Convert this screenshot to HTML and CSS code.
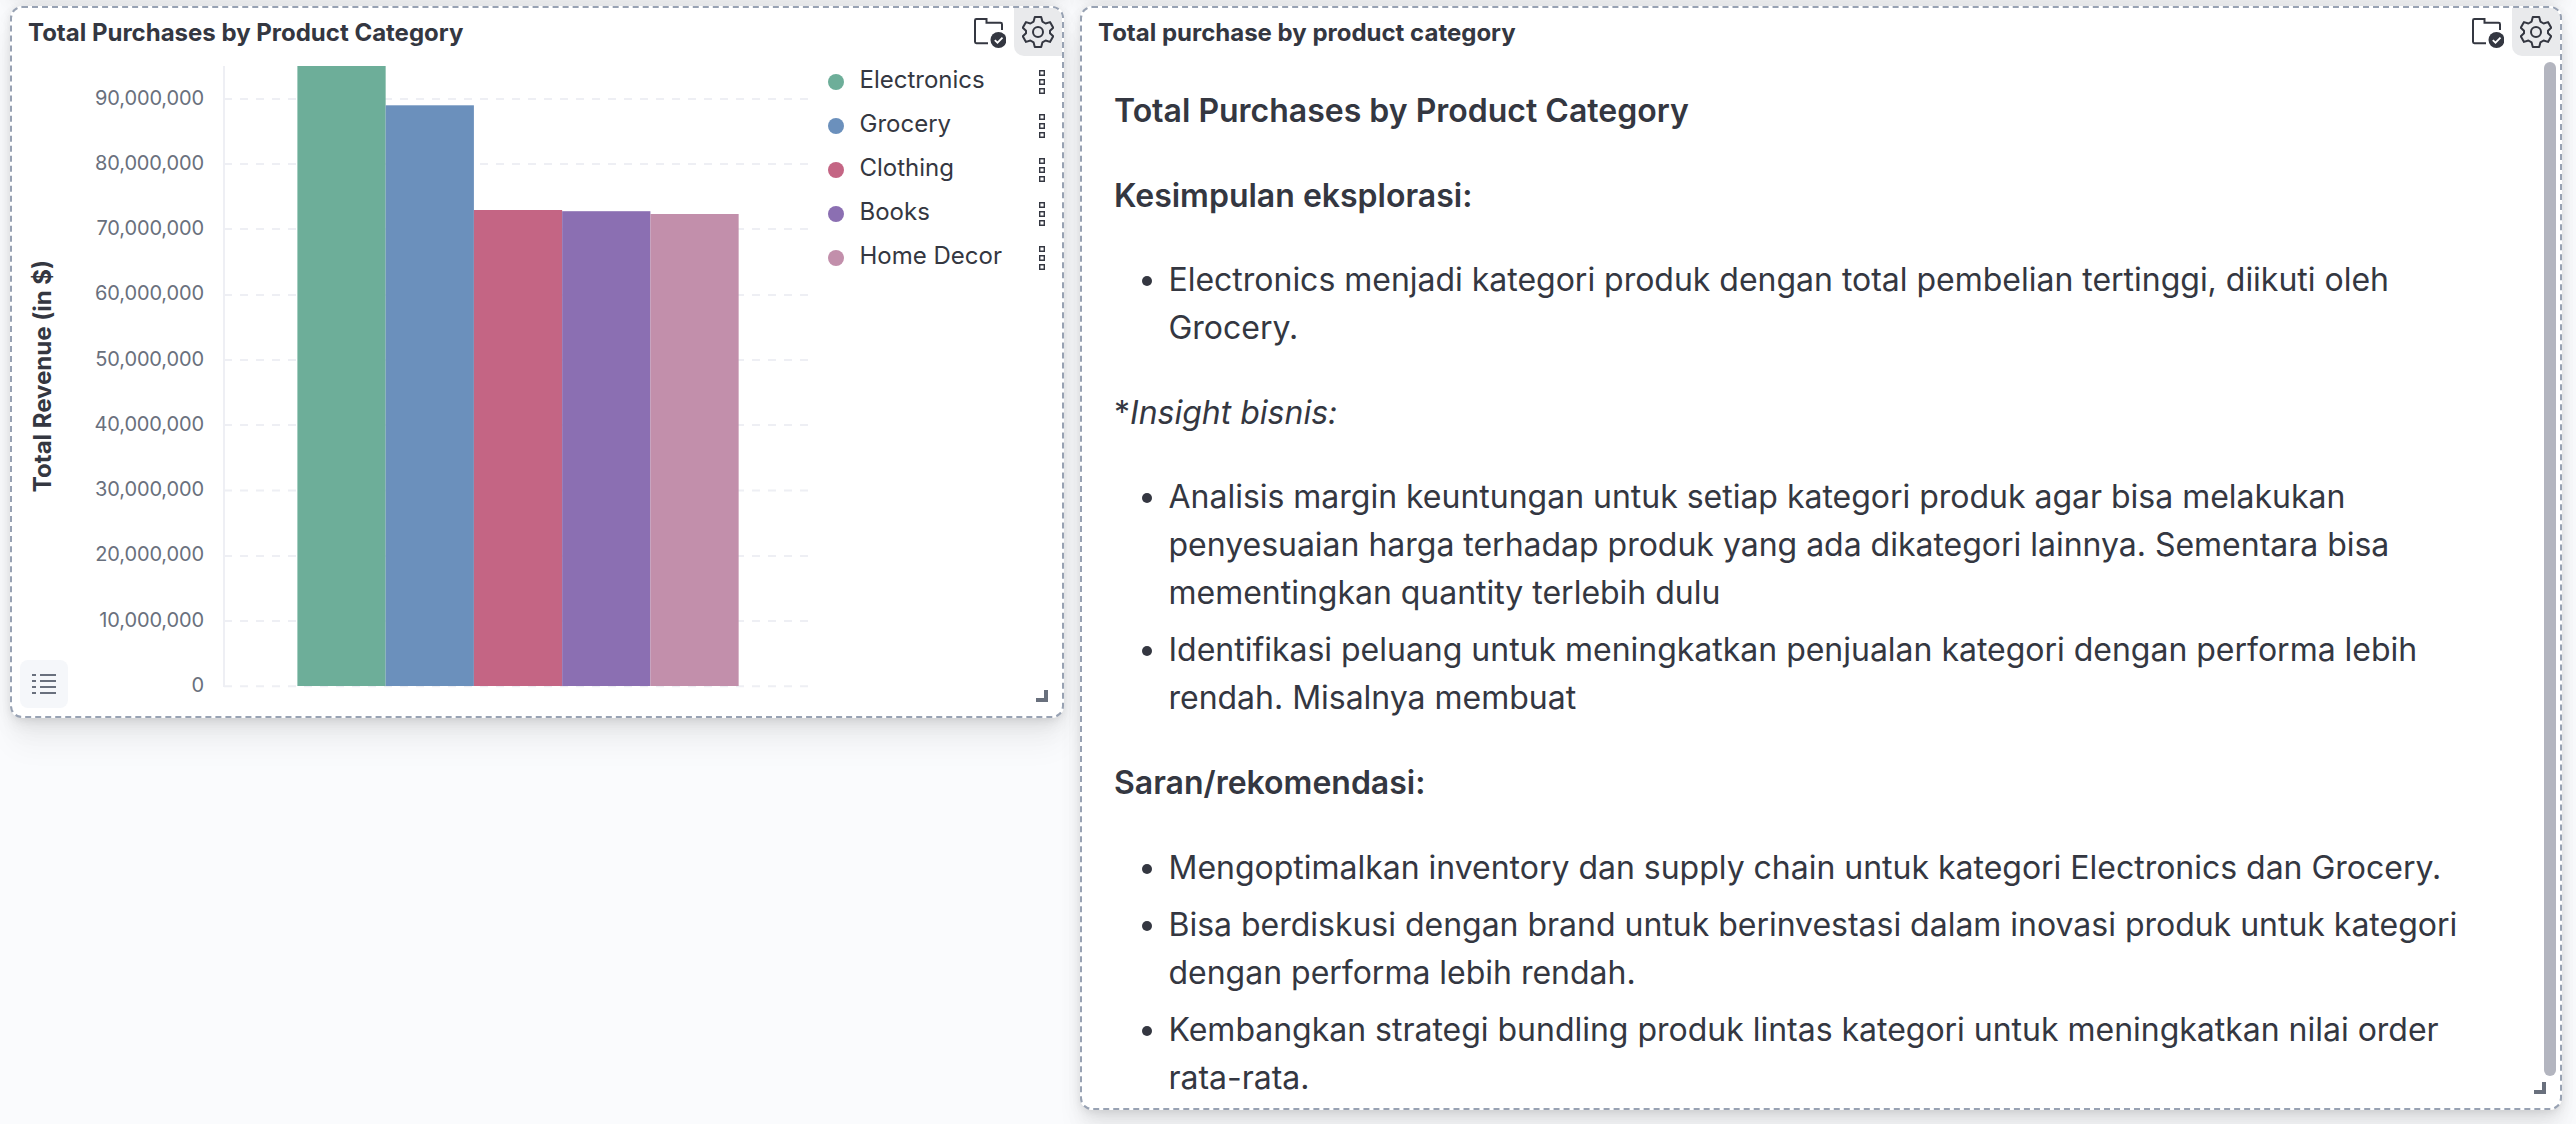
FILE: index.html
```
<!DOCTYPE html>
<html lang="id">
<head>
<meta charset="utf-8">
<title>Dashboard</title>
<link rel="stylesheet" href="styles.css">
</head>
<body>
<svg class="defs" aria-hidden="true">
  <symbol id="folder-check" viewBox="0 0 32 32">
    <path d="M14 25.200H2.400A1.400 1.400 0 0 1 1 23.800V2.400A1.400 1.400 0 0 1 2.400 1H12.500V4.800H26.600A1.400 1.400 0 0 1 28 6.200V12" fill="none" stroke="currentColor" stroke-width="2"/>
    <circle cx="24.500" cy="22" r="8" fill="currentColor"/>
    <path d="M20.800 22.200L23.500 24.700L28.500 19.600" fill="none" stroke="#fff" stroke-width="1.800"/>
  </symbol>
  <symbol id="gear" viewBox="0 0 32 32">
    <path d="M12.800 1H19.200L20.400 5.600L23.600 7.500L28 6.100L31.200 11.700L28 14.800V17.200L31.200 20.300L28 25.900L23.600 24.500L20.400 26.400L19.200 31H12.800L11.600 26.400L8.400 24.500L4 25.900L.8 20.300L4 17.200V14.800L.8 11.700L4 6.100L8.400 7.500L11.600 5.600Z" fill="none" stroke="currentColor" stroke-width="2" stroke-linejoin="round"/>
    <circle cx="16" cy="16" r="5" fill="none" stroke="currentColor" stroke-width="2"/>
  </symbol>
  <symbol id="boxes" viewBox="0 0 6 24">
    <path d="M.7.7h4.600v4.600h-4.600zM.7 9.700h4.600v4.600h-4.600zM.7 18.700h4.600v4.600h-4.600z" fill="none" stroke="currentColor" stroke-width="1.400"/>
  </symbol>
</svg>
<main class="grid">
  <div class="panel above"></div>
  <div class="panel above"></div>

  <section class="panel chart-panel">
    <header class="head">
      <h2>Total Purchases by Product Category</h2>
      <svg class="badge-icon"><use href="#folder-check"/></svg>
      <button class="options"><svg><use href="#gear"/></svg></button>
    </header>
    <div class="chart">
      <svg class="plot" viewBox="0 0 796 644">
        <g class="gridlines">
          <path d="M212 33H796M212 98H796M212 163H796M212 229H796M212 294H796M212 359H796M212 424.500H796M212 490H796M212 555H796M212 620.300H796"/>
        </g>
        <path class="axis" d="M212 0V621"/>
        <g class="bars">
          <rect x="285.400" y="0" width="88.250" height="620" fill="#6dae99"/>
          <rect x="373.650" y="39.300" width="88.250" height="580.700" fill="#6b90bc"/>
          <rect x="461.900" y="144" width="88.250" height="476" fill="#c46584"/>
          <rect x="550.150" y="145.200" width="88.250" height="474.800" fill="#8b6fb2"/>
          <rect x="638.400" y="148" width="88.250" height="472" fill="#c28fab"/>
        </g>
        <g class="ticks">
          <text x="192" y="39">90,000,000</text>
          <text x="192" y="104">80,000,000</text>
          <text x="192" y="169">70,000,000</text>
          <text x="192" y="234">60,000,000</text>
          <text x="192" y="300">50,000,000</text>
          <text x="192" y="365">40,000,000</text>
          <text x="192" y="430">30,000,000</text>
          <text x="192" y="495">20,000,000</text>
          <text x="192" y="561">10,000,000</text>
          <text x="192" y="626">0</text>
        </g>
        <text class="axis-title" transform="translate(39.300 310) rotate(-90)">Total Revenue (in $)</text>
      </svg>
      <ul class="legend">
        <li><i style="background:#6dae99"></i><span>Electronics</span><svg><use href="#boxes"/></svg></li>
        <li><i style="background:#6b90bc"></i><span>Grocery</span><svg><use href="#boxes"/></svg></li>
        <li><i style="background:#c46584"></i><span>Clothing</span><svg><use href="#boxes"/></svg></li>
        <li><i style="background:#8b6fb2"></i><span>Books</span><svg><use href="#boxes"/></svg></li>
        <li><i style="background:#c28fab"></i><span>Home Decor</span><svg><use href="#boxes"/></svg></li>
      </ul>
    </div>
    <button class="legend-toggle"><svg viewBox="0 0 24 20"><path d="M0 1H4M8 1H24M0 7H4M8 7H24M0 13H4M8 13H24M0 19H4M8 19H24" stroke="currentColor" stroke-width="2"/></svg></button>
    <span class="resize"></span>
  </section>

  <section class="panel text-panel">
    <header class="head">
      <h2>Total purchase by product category</h2>
      <svg class="badge-icon"><use href="#folder-check"/></svg>
      <button class="options"><svg><use href="#gear"/></svg></button>
    </header>
    <article class="markdown">
      <p><strong>Total Purchases by Product Category</strong></p>
      <p><strong>Kesimpulan eksplorasi:</strong></p>
      <ul>
        <li>Electronics menjadi kategori produk dengan total pembelian tertinggi, diikuti oleh<br>Grocery.</li>
      </ul>
      <p>*<em>Insight bisnis:</em></p>
      <ul>
        <li>Analisis margin keuntungan untuk setiap kategori produk agar bisa melakukan<br>penyesuaian harga terhadap produk yang ada dikategori lainnya. Sementara bisa<br>mementingkan quantity terlebih dulu</li>
        <li>Identifikasi peluang untuk meningkatkan penjualan kategori dengan performa lebih<br>rendah. Misalnya membuat</li>
      </ul>
      <p><strong>Saran/rekomendasi:</strong></p>
      <ul>
        <li>Mengoptimalkan inventory dan supply chain untuk kategori Electronics dan Grocery.</li>
        <li>Bisa berdiskusi dengan brand untuk berinvestasi dalam inovasi produk untuk kategori<br>dengan performa lebih rendah.</li>
        <li>Kembangkan strategi bundling produk lintas kategori untuk meningkatkan nilai order<br>rata-rata.</li>
      </ul>
    </article>
    <div class="scrollbar"></div>
    <span class="resize"></span>
  </section>
</main>
</body>
</html>
```
FILE: styles.css
```
* { box-sizing: border-box; }
body {
  margin: 0;
  height: 1124px;
  overflow: hidden;
  background: #fafbfd;
  color: #343741;
  font-family: Inter, "Liberation Sans", sans-serif;
}
.defs { display: none; }
.grid {
  display: grid;
  grid-template-columns: 1054px 1482px;
  grid-template-rows: 200px 1104px;
  gap: 16px;
  margin: -210px 0 0 10px;
  align-items: start;
}
.panel {
  position: relative;
  background: #fff;
  border: 2px dashed #98a2b3;
  border-radius: 12px;
  box-shadow:
    0 1.8px 8px -1px rgba(0, 0, 0, .08),
    0 5.2px 16px -1px rgba(0, 0, 0, .06),
    0 11.4px 24px -1px rgba(0, 0, 0, .05),
    0 30px 30px -1px rgba(0, 0, 0, .04);
}
.above { height: 200px; }
.chart-panel { height: 712px; }
.text-panel { height: 1104px; }
.head { display: flex; height: 48px; }
.head h2 {
  flex: 1;
  margin: 0;
  padding-left: 16px;
  font-size: 24px;
  font-weight: 700;
  line-height: 49px;
}
.badge-icon { width: 32px; height: 32px; margin: 10px 8px 0 0; }
button { border: 0; padding: 0; color: inherit; }
.options {
  display: grid;
  place-items: center;
  width: 48px;
  height: 48px;
  background: #e9eaec;
  border-radius: 0 10px 0 10px;
}
.options svg { width: 32px; height: 32px; }
.chart { display: flex; margin-top: 10px; }
.plot { width: 796px; height: 644px; flex: none; }
.gridlines { stroke: #eeeff4; stroke-width: 2; stroke-dasharray: 8 8; }
.axis { stroke: #eeeff4; stroke-width: 2; }
.ticks { fill: #69707d; font-size: 20px; letter-spacing: -.12px; text-anchor: end; }
.axis-title { fill: #343741; font-size: 24px; font-weight: 700; text-anchor: middle; }
.legend { list-style: none; margin: -8px 0 0; padding: 0 0 0 20px; flex: 1; }
.legend li { display: flex; align-items: center; height: 44px; font-size: 24px; }
.legend i { width: 16px; height: 16px; border-radius: 50%; margin-top: 4px; }
.legend span { flex: 1; padding: 0 0 2px 15.5px; }
.legend svg { width: 6px; height: 24px; margin: 4px 17px 0 0; }
.legend-toggle {
  position: absolute;
  left: 8px;
  bottom: 8px;
  width: 48px;
  height: 48px;
  border-radius: 8px;
  background: #f5f7fa;
  color: #69707d;
  display: grid;
  place-items: center;
}
.legend-toggle svg { width: 24px; height: 20px; }
.resize {
  position: absolute;
  right: 14px;
  bottom: 14px;
  width: 12px;
  height: 12px;
  border: solid #69707d;
  border-width: 0 4px 4px 0;
}
.markdown { padding: 31px 32px; font-size: 32px; line-height: 48px; white-space: nowrap; }
.markdown p { margin: 0 0 36.57px; }
.markdown ul { margin: 0 0 36.57px; padding-left: 54.5px; }
.markdown li { letter-spacing: -.015px; }
.markdown li + li { margin-top: 9.14px; }
.markdown strong { font-weight: 600; }
.scrollbar {
  position: absolute;
  right: 4px;
  top: 54px;
  width: 12px;
  height: 1014px;
  border-radius: 6px;
  background: #b3b5bf;
}
```
